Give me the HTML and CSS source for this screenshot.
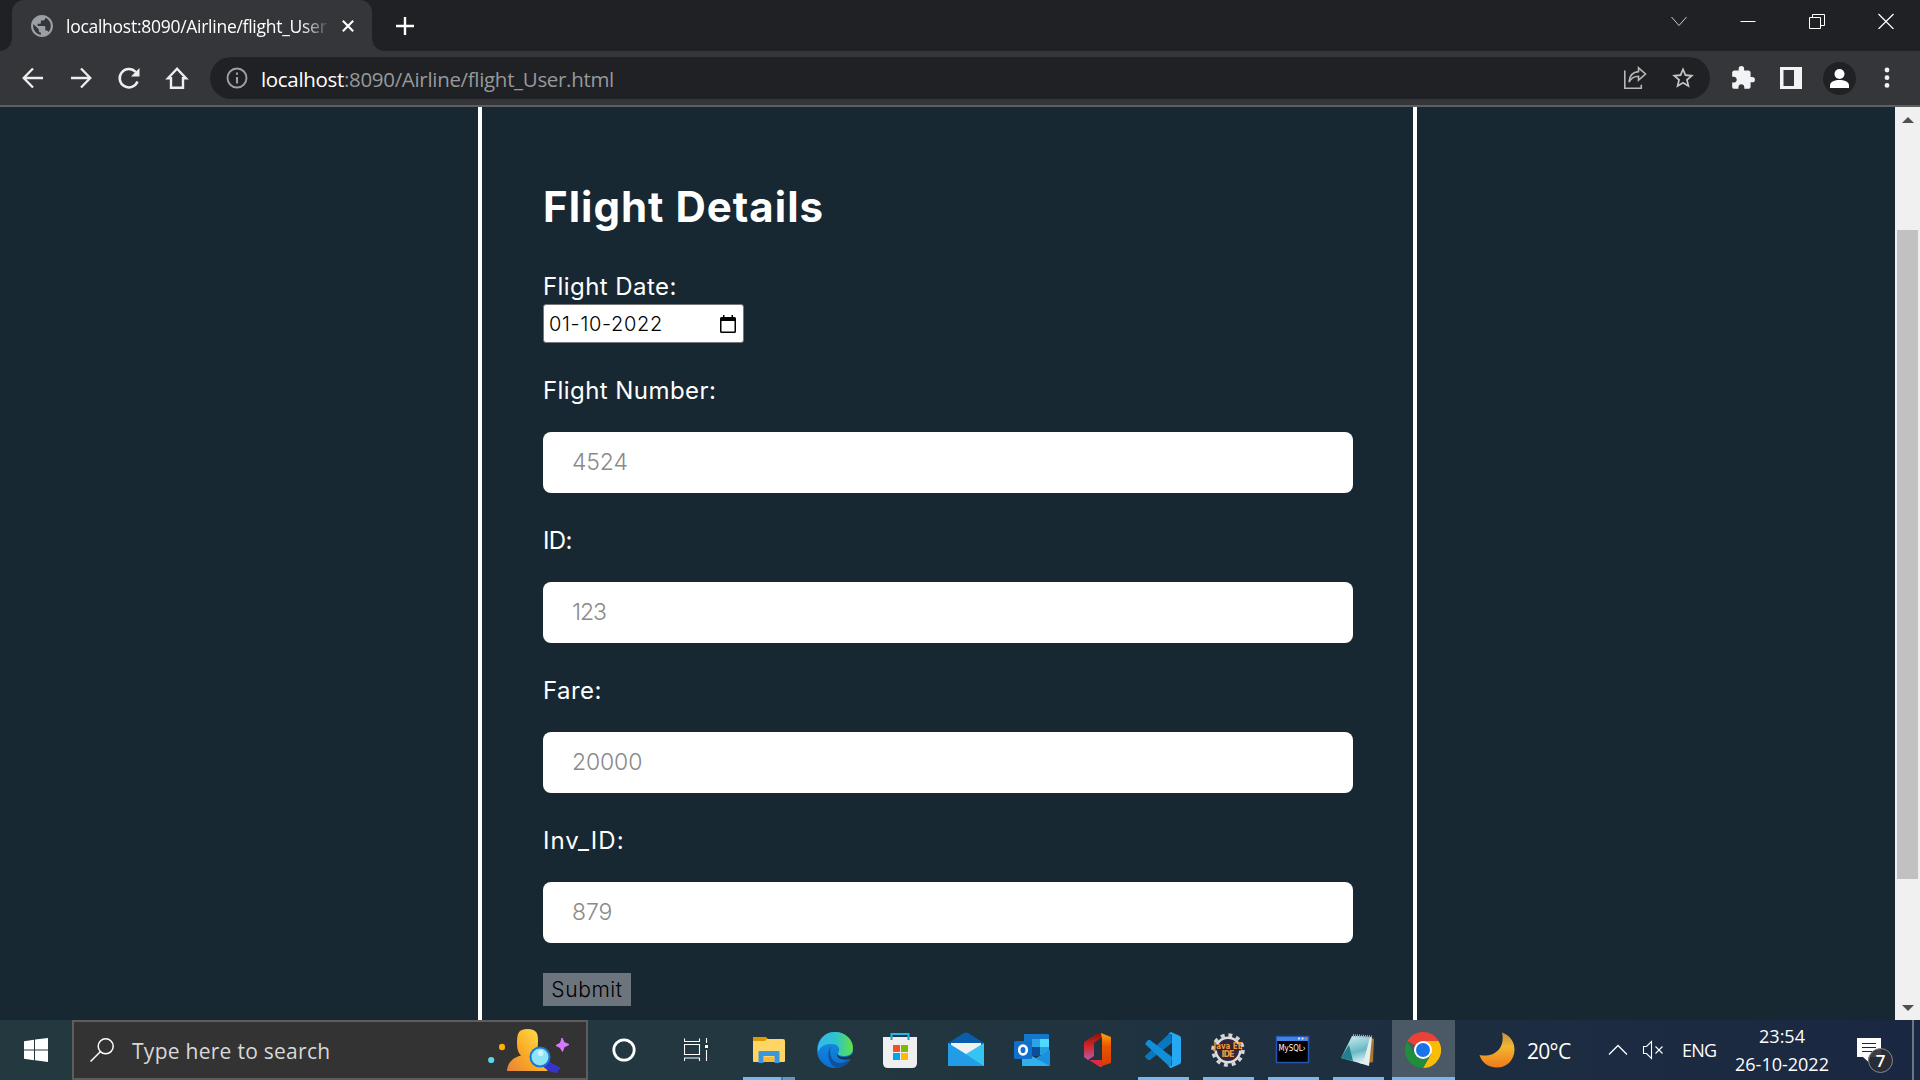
FILE: index.html
```html
<!DOCTYPE html>
<html lang="en">
<head>
<meta charset="utf-8">
<title>localhost:8090/Airline/flight_User.html</title>
<link rel="stylesheet" href="styles.css">
</head>
<body>
<div class="screen">
  <header class="tabstrip">
    <div class="tab">
      <svg class="tab-globe" viewBox="2 2 20 20"><path fill="#9aa0a6" d="M12 2C6.480 2 2 6.480 2 12s4.480 10 10 10 10-4.480 10-10S17.520 2 12 2zm-1 17.930c-3.950-.49-7-3.850-7-7.930 0-.62.08-1.210.21-1.790L9 15v1c0 1.100.9 2 2 2v1.930zm6.900-2.540c-.26-.81-1-1.390-1.900-1.390h-1v-3c0-.55-.45-1-1-1H8v-2h2c.55 0 1-.45 1-1V7h2c1.100 0 2-.9 2-2v-.41c2.930 1.190 5 4.060 5 7.410 0 2.080-.8 3.970-2.100 5.390z"/></svg>
      <span class="tab-title">localhost:8090/Airline/flight_User</span>
      <svg class="tab-close" viewBox="0 0 12 12"><path d="M.8.8l10.400 10.400M11.200.8L.8 11.200" stroke="#fff" stroke-width="2.100"/></svg>
    </div>
    <svg class="new-tab" viewBox="0 0 18 18"><path d="M9 0v18M0 9h18" stroke="#fff" stroke-width="2.400"/></svg>
    <div class="window-controls">
      <svg viewBox="0 0 16 16"><path d="M.5 4l7.500 8.500L15.500 4" stroke="#ccc" fill="none"/></svg>
      <svg viewBox="0 0 16 16"><path d="M.5 8.500h15" stroke="#fff"/></svg>
      <svg viewBox="0 0 16 16"><path d="M.5 4.500h11v11H.5zM3.500 4.500v-3h12v11h-4" stroke="#fff" fill="none"/></svg>
      <svg viewBox="0 0 16 16"><path d="M.5 1l15 15M15.500 1l-15 15" stroke="#fff" stroke-width="1.200"/></svg>
    </div>
  </header>

  <nav class="toolbar">
    <svg class="nav-icon" viewBox="0 0 24 24"><path d="M22 12H3M12 2.500L2.700 12l9.300 9.500" stroke="#eee" stroke-width="2.300" fill="none"/></svg>
    <svg class="nav-icon" viewBox="0 0 24 24"><path d="M2 12h19M12 2.500l9.300 9.500-9.300 9.500" stroke="#eee" stroke-width="2.300" fill="none"/></svg>
    <svg class="nav-icon" viewBox="0 0 24 24"><path d="M20.500 15.500A9.200 9.200 0 1 1 18.700 6" stroke="#eee" stroke-width="2.500" fill="none"/><path d="M22.500 2v8.500H14z" fill="#eee"/></svg>
    <svg class="nav-icon" viewBox="0 0 24 24"><path d="M12 2.700L3 12.300h3v9.500h12v-9.500h3z" stroke="#eee" stroke-width="2.400" fill="none"/></svg>
    <div class="omnibox">
      <svg class="info" viewBox="0 0 22 22"><circle cx="11" cy="11" r="9.500" fill="none" stroke="#9aa0a6" stroke-width="1.900"/><path d="M11 10v6.500M11 5.500v2.300" stroke="#9aa0a6" stroke-width="2.100"/></svg>
      <span class="url"><span class="host">localhost</span><span class="path">:8090/Airline/flight_User.html</span></span>
      <svg class="share" viewBox="0 0 24 24"><path d="M1.800 4.500v17.700h16.500v-3.500" fill="none" stroke="#b8b8b8" stroke-width="1.600"/><path d="M6 16C6.500 9.500 10 6 15.500 5.600V1.800L22.500 8l-7 6.200v-4C11 10.200 8.300 12 6 16z" fill="none" stroke="#b8b8b8" stroke-width="1.600"/></svg>
      <svg class="star" viewBox="0 0 24 24"><path fill="#c4c4c4" d="M22 9.240l-7.190-.62L12 2 9.190 8.630 2 9.240l5.460 4.730L5.820 21 12 17.270 18.180 21l-1.630-7.030L22 9.240zM12 15.400l-3.760 2.270 1-4.280-3.320-2.880 4.380-.38L12 6.100l1.710 4.040 4.380.38-3.320 2.880 1 4.280L12 15.400z"/></svg>
    </div>
    <svg class="puzzle" viewBox="0 0 24 24"><path fill="#f1f3f4" d="M20.500 11H19V7c0-1.100-.9-2-2-2h-4V3.500a2.500 2.500 0 0 0-5 0V5H4c-1.100 0-1.990.9-1.990 2v3.800H3.500c1.490 0 2.700 1.210 2.700 2.700s-1.210 2.700-2.700 2.700H2V20c0 1.100.9 2 2 2h3.800v-1.500c0-1.490 1.210-2.700 2.700-2.700s2.700 1.210 2.700 2.700V22H17c1.100 0 2-.9 2-2v-4h1.500a2.500 2.500 0 0 0 0-5z"/></svg>
    <svg class="panel" viewBox="0 0 22 22"><path fill="#f1f3f4" fill-rule="evenodd" d="M0 0h22v22H0zM3.500 3h10.500v16H3.500z"/></svg>
    <svg class="avatar" viewBox="0 0 33 33"><circle cx="16.500" cy="16.500" r="16.500" fill="#202124"/><circle cx="16.500" cy="12" r="5" fill="#fff"/><path d="M7 26v-2.500c0-4 5-5.500 9.500-5.500s9.500 1.500 9.500 5.500V26z" fill="#fff"/></svg>
    <svg class="menu" viewBox="0 0 6 22"><circle cx="3" cy="3" r="2.400" fill="#f1f3f4"/><circle cx="3" cy="10.700" r="2.400" fill="#f1f3f4"/><circle cx="3" cy="18.400" r="2.400" fill="#f1f3f4"/></svg>
  </nav>

  <div class="viewport">
    <main class="page">
      <form class="card">
        <h1>Flight Details</h1>
        <label class="date-label">Flight Date:</label>
        <div class="date-input">
          <span>01-10-2022</span>
          <svg viewBox="0 0 16 18"><path fill="#000" fill-rule="evenodd" d="M3 0h1.500v2h7V0H13v2h1.500A1.500 1.500 0 0 1 16 3.500v13a1.500 1.500 0 0 1-1.500 1.500h-13A1.500 1.500 0 0 1 0 16.500v-13A1.500 1.500 0 0 1 1.500 2H3zM1.500 6v10.500h13V6z"/></svg>
        </div>
        <label>Flight Number:</label>
        <div class="field">4524</div>
        <label class="tight">ID:</label>
        <div class="field narrow">123</div>
        <label>Fare:</label>
        <div class="field">20000</div>
        <label class="wide">Inv_ID:</label>
        <div class="field">879</div>
        <button type="button" class="submit">Submit</button>
      </form>
    </main>
    <div class="scrollbar">
      <svg viewBox="0 0 12 6"><path d="M6 0l6 6H0z" fill="#505050"/></svg>
      <div class="thumb"></div>
      <svg viewBox="0 0 12 6"><path d="M6 6l6-6H0z" fill="#505050"/></svg>
    </div>
  </div>

  <footer class="taskbar">
    <div class="start"><svg viewBox="0 0 24 24"><path fill="#fff" d="M0 3.300l10-1.500v9.700H0zM11 1.600L24 0v11.500H11zM0 12.500h10v9.700L0 20.700zM11 12.500h13V24l-13-1.700z"/></svg></div>
    <div class="search">
      <svg class="magnifier" viewBox="0 0 24 24"><circle cx="15.700" cy="8.300" r="7.500" fill="none" stroke="#fff" stroke-width="1.500"/><path d="M10.300 13.700L.5 23.500" stroke="#fff" stroke-width="1.500"/></svg>
      <span class="search-text">Type here to search</span>
      <svg class="doodle" viewBox="0 0 82 46">
        <defs><linearGradient id="person" x1="0" y1="1" x2="1" y2=".2"><stop offset="0" stop-color="#e8813d"/><stop offset=".45" stop-color="#f9a825"/><stop offset="1" stop-color="#ffe04d"/></linearGradient></defs>
        <ellipse cx="14" cy="20" rx="3" ry="3.200" fill="#ffb300"/><circle cx="3.200" cy="33" r="3.100" fill="#5dd5e8"/>
        <path d="M19 44c.5-8 5-13 14-15.500-3-3-4-6.500-4-12C29 7 30 2 39.500 2S50 7 50 13c0 7-1 11-3 15 7 1.500 12 8 12.500 16z" fill="url(#person)"/>
        <path d="M61 36l10 5-3 4-7-2-4-3z" fill="#3535cc" stroke="#3535cc" stroke-width="2"/>
        <circle cx="52" cy="30" r="9.500" fill="#8ee3f5" stroke="#1a76d8" stroke-width="2"/><circle cx="52.500" cy="26" r="3" fill="#c9f5ff"/>
        <path d="M74 11l2 4.500 5 2-5 2.500-1.500 4.500-2.300-4L68 18.500l4.500-2.500z" fill="#d778ff" stroke="#d778ff"/>
      </svg>
    </div>
    <div class="system-buttons">
      <svg viewBox="0 0 24 24"><circle cx="12" cy="12" r="10.200" fill="none" stroke="#fff" stroke-width="2.800"/></svg>
      <svg viewBox="0 0 24 24"><path d="M.5.500v3h15v-3M.5 6.500h15v10H.5zM.5 23v-3h15v3M22.500 0v5M22.500 12v11" stroke="#fff" fill="none" stroke-width="1.100"/><path d="M21 7h3v3h-3z" fill="#fff"/></svg>
    </div>
    <div class="apps">
      <div class="app open explorer"><svg viewBox="0 0 36 36"><path d="M2 6q0-1 1-1h11l3 2h15q2 0 2 2v20q0 1-1 1H3q-1 0-1-1z" fill="#ffd666"/><path d="M2 6q0-1 1-1h11q2 0 2 2l-2 2H2z" fill="#dc9b00"/><path d="M7.500 31V20q0-1 1-1h19q1 0 1 1v11h-5v-7h-11v7z" fill="#3b97dd"/><path d="M13 25h10v5H13z" fill="#f8b934"/></svg></div>
      <div class="app"><svg viewBox="0 0 36 36"><defs><linearGradient id="edgeTop"><stop stop-color="#35b8f0"/><stop offset=".5" stop-color="#2bc4cf"/><stop offset="1" stop-color="#63e23f"/></linearGradient><linearGradient id="edgeBody" x2="0" y2="1"><stop stop-color="#1594e4"/><stop offset="1" stop-color="#0b6ed0"/></linearGradient></defs><circle cx="18" cy="18" r="18" fill="url(#edgeBody)"/><path d="M1 14C4 4 10 0 18 0c10 0 18 7 18 16 0 6-4 8-9 8-4 0-7-1-6-3 3-4 0-9-6-9-6 0-11 1-14 8z" fill="url(#edgeTop)"/><path d="M15 14c-4 4-2 17 8 17 4 0 7-2 10-4-3 6-9 9-13 9-8-2-12-16-5-22z" fill="#134f9c"/><path d="M21 21c-1 2.500 2 4 6 4 4 0 6-1 9-4v6h-2.500c-8 2-16-1-12.500-6z" fill="#22343d"/></svg></div>
      <div class="app"><svg viewBox="0 0 36 36"><path d="M9.500 8V2h17v6" fill="none" stroke="#22b5ef" stroke-width="2"/><path d="M1 5h34v26q0 5-5 5H6q-5 0-5-5z" fill="#efefef"/><path d="M9.500 8V5M26.500 8V5" stroke="#1793d8" stroke-width="2"/><path d="M11 13h7v7h-7z" fill="#f25022"/><path d="M19 13h7v7h-7z" fill="#7fba00"/><path d="M11 21h7v7h-7z" fill="#00a4ef"/><path d="M19 21h7v7h-7z" fill="#ffb900"/></svg></div>
      <div class="app"><svg viewBox="0 0 36 36"><path d="M0 11L16 1q2-1 4 0l16 10v5H0z" fill="#0b5cab"/><path d="M3 11h30v14H3z" fill="#f2f2f2"/><path d="M0 11l18 11 18-11v23H0z" fill="#34c5f2"/><path d="M0 11l36 23H0z" fill="#239ce6"/></svg></div>
      <div class="app"><svg viewBox="0 0 36 36"><path d="M10 2h24q1 0 1 1v16H10z" fill="#1377cc"/><path d="M18 7h9v9h-9z" fill="#2ea4e8"/><path d="M26 7h9v9h-9z" fill="#50d9ff"/><path d="M18 15h8v9h-8z" fill="#0b4f95"/><path d="M26 15h9v8h-9z" fill="#279ee0"/><path d="M8 19l14 7 14-8v15q0 1-1 1H9q-1 0-1-1z" fill="#1b90df"/><path d="M8 19l28 15H9q-1 0-1-1z" fill="#30b1ec"/><rect y="9" width="18" height="18" rx="1.500" fill="#1070cc"/><ellipse cx="9" cy="18" rx="3.800" ry="4.400" fill="none" stroke="#fff" stroke-width="2.600"/></svg></div>
      <div class="app"><svg viewBox="0 0 36 36"><defs><linearGradient id="officeSide" x2="0" y2="1"><stop stop-color="#8c1208"/><stop offset=".5" stop-color="#d3262d"/><stop offset="1" stop-color="#b25cab"/></linearGradient><linearGradient id="officeFront" x2="0" y2="1"><stop stop-color="#ffa30a"/><stop offset=".4" stop-color="#e85500"/><stop offset="1" stop-color="#d83b01"/></linearGradient></defs><path d="M4 10L18 1l7 2-7 5-4 3v13l-6 4-4-3z" fill="url(#officeSide)"/><path d="M9 28h13v7h-2z" fill="#e32843"/><path d="M21 1l10 4v26l-12 4 3-3V7z" fill="url(#officeFront)"/></svg></div>
      <div class="app open"><svg viewBox="0 0 36 36"><path d="M26 0L0 24v1l3 3h2L27 11z" fill="#0a76bd"/><path d="M0 12l3-4h2l22 17-1 11z" fill="#118fd8"/><path d="M26 0l9 4q1 1 1 2v24q0 1-1 2l-9 4q-1 0-3-2 3 1 4-1V3q-1-2-4-1z" fill="#27a8f3"/></svg></div>
      <div class="app open"><svg viewBox="0 0 36 36"><circle cx="18" cy="18" r="15" fill="none" stroke="#d4d4d4" stroke-width="3.500" stroke-dasharray="3.920 3.934"/><circle cx="18" cy="18" r="12.300" fill="#30263f" stroke="#ddd" stroke-width="2.500"/><path d="M5 12.500h26v6H5z" fill="#2a2232"/><text class="ide" x="18" y="17" textLength="29" lengthAdjust="spacingAndGlyphs">Java EE</text><text class="ide" x="18" y="24.500" textLength="13">IDE</text></svg></div>
      <div class="app open"><svg viewBox="0 0 36 36"><rect x="1.500" y="4.500" width="32" height="26" fill="#000" stroke="#2455b0" stroke-width="1.500"/><path d="M2 5h31v4H2z" fill="#3f85df"/><path d="M23 5.500h2v2h-2zM26.500 5.500h2v2h-2z" fill="#cfe0fa"/><path d="M30 5.500h2v2h-2z" fill="#e8704c"/><text class="sql" x="3.500" y="18.500" textLength="27" lengthAdjust="spacingAndGlyphs">MySQL›</text></svg></div>
      <div class="app open"><svg viewBox="0 0 36 36"><defs><linearGradient id="sheet" x1=".2" y1="0" x2=".5" y2="1"><stop stop-color="#cdeef2"/><stop offset=".6" stop-color="#69b8c4"/><stop offset="1" stop-color="#d9f0f3"/></linearGradient></defs><path d="M30 5l4 2-1 23-5 1z" fill="#a8792c"/><path d="M13 4l19 1-3 29-10-3z" fill="#e8eeee"/><path d="M12 4l18 1-7 27L1 26z" fill="url(#sheet)"/><path d="M1 26l8-13 4 16z" fill="#227d8d"/><path d="M13 3.500l19 1.500" stroke="#aaa" stroke-width="3" stroke-dasharray="1 1"/></svg></div>
      <div class="app open active"><svg viewBox="0 0 36 36"><path d="M18 18L2.400 9A18 18 0 0 1 33.600 9z" fill="#ea4335"/><path d="M18 9h15.600A18 18 0 0 1 18 36l7.800-13.500z" fill="#fbbc04"/><path d="M2.400 9l7.800 13.500A9 9 0 0 0 25.800 22.500L18 36A18 18 0 0 1 2.400 9z" fill="#1e8e3e"/><circle cx="18" cy="18" r="9" fill="#fff"/><circle cx="18" cy="18" r="7" fill="#1a73e8"/></svg></div>
    </div>
    <div class="tray">
      <svg class="moon" viewBox="0 0 36 36"><defs><linearGradient id="moonFill" x2="0" y2="1"><stop stop-color="#c98f45"/><stop offset=".4" stop-color="#f0b72f"/><stop offset="1" stop-color="#f07a1c"/></linearGradient></defs><path d="M23 .5C31 3 35.500 10 35.500 17.500 35.500 28 28 35.500 18 35.500 9 35.500 2.500 30 .5 23 13 26 27 18 23 .5z" fill="url(#moonFill)"/></svg>
      <span class="temp">20°C</span>
      <svg class="chevron" viewBox="0 0 20 12"><path d="M1 10.500L10 1.500l9 9" stroke="#fff" fill="none" stroke-width="1.300"/></svg>
      <svg class="speaker" viewBox="0 0 22 20"><path d="M1.500 6.500h3l5-5v17l-5-5h-3zM13.500 6.500l7 7M20.500 6.500l-7 7" stroke="#fff" fill="none" stroke-width="1.100"/></svg>
      <span class="lang">ENG</span>
      <div class="clock"><span>23:54</span><span>26-10-2022</span></div>
      <div class="notice">
        <svg viewBox="0 0 38 38"><path d="M1 1h24v19H12.500v5L7 20H1z" fill="#fff"/><path d="M6 6.500h14M6 10.500h14M6 14.500h14" stroke="#1b2842" stroke-width="1.200"/></svg>
        <span class="count">7</span>
      </div>
      <div class="show-desktop"></div>
    </div>
  </footer>
</div>
</body>
</html>
```
FILE: styles.css
```css
* { box-sizing: border-box; }
body { margin: 0; overflow: hidden; font-family: "Open Sans", "Noto Sans", sans-serif; }
svg { display: block; flex: none; }
.screen { width: 1920px; height: 1080px; display: flex; flex-direction: column; background: #172833; }

.tabstrip { height: 51px; flex: none; display: flex; background: #202124; padding-left: 12px; align-items: center; }
.tab { position: relative; width: 360px; height: 51px; background: #35363a; border-radius: 12px 12px 0 0; display: flex; align-items: center; padding-left: 19px; }
.tab::before, .tab::after { content: ""; position: absolute; bottom: 0; width: 12px; height: 12px; }
.tab::before { left: -12px; background: radial-gradient(circle at 0 0, transparent 11.500px, #35363a 12px); }
.tab::after { right: -12px; background: radial-gradient(circle at 100% 0, transparent 11.500px, #35363a 12px); }
.tab-globe { width: 22px; height: 22px; }
.tab-title { width: 263px; margin-left: 13px; overflow: hidden; white-space: nowrap; color: #fff; font-size: 17.500px; letter-spacing: -.27px; line-height: 30px; -webkit-mask-image: linear-gradient(90deg, #000 235px, transparent 265px); mask-image: linear-gradient(90deg, #000 235px, transparent 265px); }
.tab-close { width: 12px; height: 12px; margin-left: 13px; }
.new-tab { width: 18px; height: 18px; margin-left: 24px; }
.window-controls { margin-left: auto; display: flex; gap: 53px; padding-right: 26px; height: 16px; margin-bottom: 9px; }
.window-controls svg { width: 16px; height: 16px; }

.toolbar { height: 56px; flex: none; display: flex; align-items: center; background: #35363a; border-bottom: 2px solid #5d5e61; padding-left: 21px; }
.nav-icon { width: 24px; height: 24px; margin-right: 24px; }
.omnibox { width: 1500px; height: 42px; margin-left: -3px; border-radius: 21px; background: #202124; display: flex; align-items: center; padding: 0 14px 0 16px; }
.info { width: 22px; height: 22px; }
.url { margin-left: 13px; padding-top: 2px; font-size: 20.500px; letter-spacing: -.32px; line-height: 30px; white-space: nowrap; color: #96999c; }
.host { color: #fff; }
.share { width: 24px; height: 24px; margin-left: auto; }
.star { width: 26px; height: 26px; margin-left: 23px; }
.puzzle { width: 26px; height: 26px; margin-left: 20px; }
.panel { width: 22px; height: 22px; margin-left: 24px; }
.avatar { width: 33px; height: 33px; margin-left: 21px; }
.menu { width: 6px; height: 22px; margin-left: 28px; }

.viewport { flex: 1; min-height: 0; display: flex; }
.page { flex: 1; overflow: hidden; padding-left: 478px; }
.card { width: 939px; height: 913px; border: solid #fff; border-width: 0 4px; padding: 70px 60px 0 61px; color: #fff; font-family: Inter, "Open Sans", sans-serif; display: flex; flex-direction: column; align-items: flex-start; }
.card h1 { margin: 0; font-size: 42px; line-height: 60px; font-weight: 700; letter-spacing: 1px; }
.card label { font-size: 24px; line-height: 36px; padding-top: 1px; margin-bottom: 23px; letter-spacing: .43px; }
.card label.tight { letter-spacing: -.6px; }
.card label.wide { letter-spacing: 1.050px; }
.card .date-label { margin: 31px 0 -1px; }
.date-input { width: 201px; height: 39px; margin-bottom: 29px; background: #fff; border: 1px solid #767676; border-radius: 3px; color: #000; font-size: 20px; letter-spacing: .7px; display: flex; align-items: center; justify-content: space-between; padding: 0 7px 0 5px; font-weight: 300; }
.date-input svg { width: 16px; height: 18px; }
.field { width: 810px; height: 61px; margin-bottom: 29px; border-radius: 8px; background: #fff; color: #8a8a8a; font-size: 23px; font-weight: 300; line-height: 61px; letter-spacing: -.15px; padding-left: 29px; }
.field.narrow { letter-spacing: -1.100px; }
.submit { width: 88px; height: 33px; margin-top: 1px; border: 0; padding: 0; background: #6c757d; color: #000; font: 300 21px/33px Inter, "Open Sans", sans-serif; letter-spacing: .6px; }
.scrollbar { width: 25px; background: #f0f0f0; display: flex; flex-direction: column; align-items: center; padding: 10px 0 9px; }
.scrollbar svg { width: 12px; height: 6px; }
.thumb { width: 21px; height: 649px; margin: 107px 0 auto; background: #c1c1c1; }

.taskbar { height: 60px; flex: none; display: flex; background: linear-gradient(90deg, #23393f 0, #22373f 45%, #1e2f40 70%, #1a2742 100%); color: #fff; }
.start { width: 72px; display: flex; align-items: center; justify-content: center; }
.start svg { width: 24px; height: 24px; }
.search { width: 516px; border: 2px solid #5d5d5d; background: #333; display: flex; align-items: center; padding: 0 16px; color: #d8d8d8; font-size: 21px; white-space: nowrap; }
.search-text { letter-spacing: .27px; padding-top: 2px; }
.magnifier { width: 24px; height: 24px; margin-right: 18px; }
.doodle { width: 82px; height: 46px; margin-left: auto; }
.system-buttons { width: 148px; display: flex; align-items: center; padding-left: 24px; gap: 48px; }
.system-buttons svg { width: 24px; height: 24px; }
.apps { width: 720px; display: grid; grid-template-columns: repeat(6, 65.800px) repeat(5, 65.040px); }
.app { position: relative; display: flex; align-items: center; justify-content: center; }
.app svg { width: 36px; height: 36px; }
.app.open::after { content: ""; position: absolute; bottom: 0; left: 7px; right: 7px; height: 3px; background: #76b9ed; }
.app.explorer::after { background: linear-gradient(90deg, #76b9ed 38px, #4c7796 38px, #4c7796 40px, #6596c0 40px); }
.app.active { background: #4b5865; margin: 0 1px; }
.app.active::after { left: 0; right: 0; }
.ide { font: 700 8px "DejaVu Sans", sans-serif; fill: #f29a3c; text-anchor: middle; }
.sql { font: 8px "DejaVu Sans", sans-serif; fill: #fff; }
.tray { flex: 1; display: flex; align-items: center; padding-left: 23px; white-space: nowrap; }
.moon { width: 36px; height: 36px; }
.temp { width: 58px; margin-left: 12px; padding-top: 1px; font-size: 21px; letter-spacing: -.7px; }
.chevron { width: 20px; height: 12px; margin-left: 23px; }
.speaker { width: 22px; height: 20px; margin-left: 14px; }
.lang { font-size: 18px; margin-left: 18px; width: 40px; letter-spacing: -.8px; }
.clock { width: 100px; margin-left: 10px; display: flex; flex-direction: column; align-items: center; font-size: 18px; line-height: 28px; }
.notice { position: relative; width: 38px; height: 38px; margin-left: 24px; margin-top: 12px; }
.notice svg { width: 38px; height: 38px; }
.count { position: absolute; left: 12px; top: 11px; width: 25px; height: 25px; border: 1px solid #85888c; border-radius: 50%; background: #2b2d33e8; font-size: 17px; line-height: 23px; text-align: center; font-weight: 600; }
.show-desktop { width: 8px; height: 60px; margin-left: auto; border-left: 2px solid #6c7584; }
```
